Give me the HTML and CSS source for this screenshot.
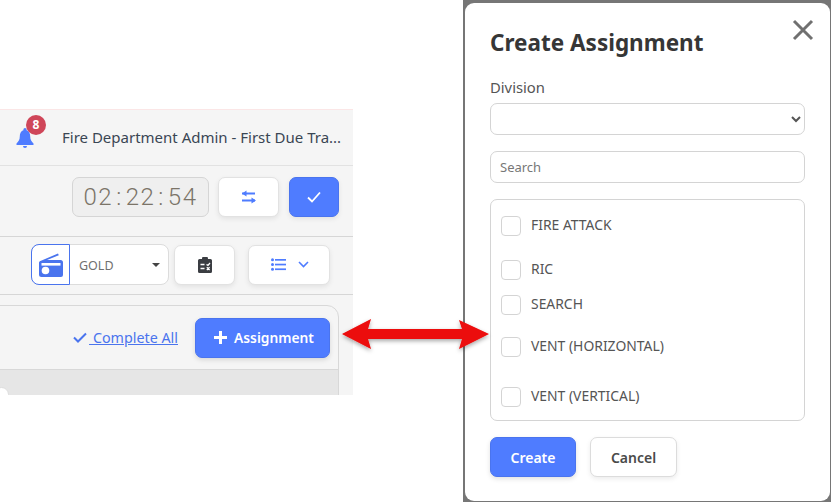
FILE: index.html
```html
<!DOCTYPE html>
<html lang="en">
<head>
<meta charset="utf-8">
<title>Create Assignment</title>
<link rel="stylesheet" href="styles.css">
</head>
<body>
<section class="app">
  <div class="bar bar-title">
    <span class="bell">
      <svg width="20" height="22" viewBox="0 0 20 22"><path fill="#4f7cff" d="M10 1a1.600 1.600 0 0 1 1.600 1.600v.6c2.400.7 3.600 3.200 3.600 6.100 0 3.800 1.400 5.300 3.300 7.200v1.500h-17v-1.500c1.900-1.900 3.300-3.400 3.300-7.200 0-2.900 1.200-5.400 3.600-6.100v-.6A1.600 1.600 0 0 1 10 1z"/><path fill="#4f7cff" d="M8 19h4a2 2 0 0 1-4 0z"/></svg>
      <b class="badge">8</b>
    </span>
    <span class="app-title">Fire Department Admin - First Due Tra...</span>
  </div>
  <div class="bar bar-clock">
    <span class="clock">02<span class="sep">:</span>22<span class="sep">:</span>54</span>
    <button class="tool tool-sliders" type="button">
      <svg width="16" height="16" viewBox="0 0 16 16" fill="none" stroke="#4f7cff" stroke-width="1.800"><path d="M1 4.500h13M1 11.500h13"/><path fill="#4f7cff" stroke="none" d="M5.500 1.500v6L1 4.500zM10.500 8.500v6l4.500-3z"/></svg>
    </button>
    <button class="tool tool-primary" type="button">
      <svg width="16" height="14" viewBox="0 0 16 14" fill="none" stroke="#fff" stroke-width="1.800"><path d="M2 7.500l4 4 8-9"/></svg>
    </button>
  </div>
  <div class="bar bar-controls">
    <div class="radio-select">
      <span class="radio-icon">
        <svg width="24" height="26" viewBox="0 0 24 26"><path fill="#4a74ee" d="M2 8.800L19 1.500l.8 1.700L8 8h13.500A2.500 2.500 0 0 1 24 10.500V23a2 2 0 0 1-2 2H2.500A2.500 2.500 0 0 1 0 22.500v-12A2.500 2.500 0 0 1 2 8.800z"/><circle cx="6.500" cy="18.500" r="3.800" fill="#fff"/><rect x="2.500" y="11" width="19" height="2.600" fill="#fff"/></svg>
      </span>
      <span class="radio-value">GOLD<i class="caret"></i></span>
    </div>
    <button class="tool tool-clip" type="button">
      <svg width="14" height="16" viewBox="0 0 14 16"><path fill="#3a3d42" d="M1.500 2H4a3 3 0 0 1 6 0h2.500A1.500 1.500 0 0 1 14 3.500v11a1.500 1.500 0 0 1-1.500 1.500h-11A1.500 1.500 0 0 1 0 14.500v-11A1.500 1.500 0 0 1 1.500 2z"/><path stroke="#fff" stroke-width="1.300" fill="none" d="M2.500 7.500h4M2.500 11.500h4M8.500 7.500l1.500 1 2-2.500M8.800 10.200l2.800 2.800M11.600 10.200l-2.800 2.800"/></svg>
    </button>
    <button class="tool tool-list" type="button">
      <svg width="15" height="13" viewBox="0 0 15 13" fill="#4f7cff"><circle cx="1.500" cy="1.800" r="1.500"/><circle cx="1.500" cy="6.500" r="1.500"/><circle cx="1.500" cy="11.200" r="1.500"/><rect x="4" y="1" width="11" height="1.700"/><rect x="4" y="5.700" width="11" height="1.700"/><rect x="4" y="10.400" width="11" height="1.700"/></svg>
      <svg width="11" height="7" viewBox="0 0 11 7" fill="none" stroke="#4f7cff" stroke-width="1.600"><path d="M1 1l4.500 4.500L10 1"/></svg>
    </button>
  </div>
  <div class="card">
    <div class="card-head">
      <a class="complete" href="#">
        <svg width="14" height="11" viewBox="0 0 14 11" fill="none" stroke="#4a74ee" stroke-width="2"><path d="M1 5.500l4 4 8-8"/></svg>
        <span>&nbsp;Complete All</span>
      </a>
      <button class="btn-primary btn-assign" type="button">
        <svg width="13" height="13" viewBox="0 0 13 13" fill="#fff"><path d="M5 0h3v5h5v3H8v5H5V8H0V5h5z"/></svg>
        Assignment
      </button>
    </div>
    <div class="card-body"><i class="knob"></i></div>
  </div>
</section>

<section class="backdrop">
  <div class="modal">
    <button class="close" type="button" aria-label="Close">
      <svg width="22" height="22" viewBox="0 0 22 22" stroke="#707070" stroke-width="3" fill="none"><path d="M2 2l18 18M20 2L2 20"/></svg>
    </button>
    <h1 class="modal-title">Create Assignment</h1>
    <label class="field-label" for="division">Division</label>
    <select class="input select" id="division"><option></option></select>
    <input class="input search" type="text" placeholder="Search">
    <div class="checklist">
      <label class="check gap-44"><i class="box"></i><span>FIRE ATTACK</span></label>
      <label class="check gap-35"><i class="box"></i><span>RIC</span></label>
      <label class="check gap-42"><i class="box"></i><span>SEARCH</span></label>
      <label class="check gap-50"><i class="box"></i><span>VENT (HORIZONTAL)</span></label>
      <label class="check"><i class="box"></i><span>VENT (VERTICAL)</span></label>
    </div>
    <div class="actions">
      <button class="btn-primary btn-create" type="button">Create</button>
      <button class="btn-cancel" type="button">Cancel</button>
    </div>
  </div>
</section>

<svg class="arrow" width="160" height="44" viewBox="0 0 160 44">
  <defs><filter id="sh" x="-5%" y="-30%" width="110%" height="160%"><feDropShadow dx="0" dy="2" stdDeviation="2" flood-color="#000" flood-opacity=".35"/></filter></defs>
  <path filter="url(#sh)" fill="#ec0808" d="M4 17L33 2l-3 10h94l-3-9 30 14-30 15 3-10H30l3 10z"/>
</svg>
</body>
</html>
```
FILE: styles.css
```css
* { box-sizing: border-box; }
html, body { margin: 0; padding: 0; }
body {
  position: relative;
  width: 831px;
  height: 502px;
  overflow: hidden;
  background: #fff;
  font-family: "Noto Sans", "Open Sans", sans-serif;
  color: #4a4a4a;
}
button { font-family: inherit; cursor: pointer; }

/* left screenshot */
.app {
  position: absolute;
  left: 0;
  top: 109px;
  width: 353px;
  height: 286px;
  overflow: hidden;
  background: #f5f5f5;
  border-top: 1px solid #fbe6e6;
}
.bar {
  display: flex;
  align-items: center;
  border-bottom: 1px solid #dcdcdc;
}
.bar-title { height: 56px; padding-left: 15px; border-bottom-color: #e2e2e2; }
.bell { position: relative; width: 20px; height: 22px; }
.bell svg { display: block; }
.badge {
  position: absolute;
  left: 11px;
  top: -12px;
  width: 20px;
  height: 20px;
  border-radius: 50%;
  background: #cf4659;
  color: #fff;
  font-size: 12px;
  line-height: 20px;
  text-align: center;
}
.app-title {
  margin-left: 27px;
  margin-bottom: 2px;
  font-size: 15px;
  color: #3a4654;
  white-space: nowrap;
}
.bar-clock {
  height: 71px;
  justify-content: flex-end;
  gap: 10px;
  padding-right: 14px;
  padding-bottom: 8px;
  border-bottom-color: #d6d6d6;
}
.clock {
  width: 137px;
  height: 40px;
  margin-right: -1px;
  border: 1px solid #d5d5d5;
  border-radius: 7px;
  background: #efefef;
  color: #7b7468;
  font-family: Roboto, sans-serif;
  font-weight: 300;
  font-size: 24px;
  line-height: 38px;
  letter-spacing: 1.500px;
  text-align: center;
}
.sep { margin: 0 3px; }
.tool {
  display: flex;
  align-items: center;
  justify-content: center;
  height: 40px;
  padding: 0;
  border: 1px solid #e2e2e2;
  border-radius: 7px;
  background: #fff;
  box-shadow: 0 2px 5px rgba(0,0,0,.08);
}
.tool-sliders { width: 61px; }
.tool-primary { width: 50px; background: #4f7cff; border-color: #4a74ee; }
.bar-controls {
  height: 58px;
  padding-left: 31px;
  padding-bottom: 2px;
  border-bottom-color: #d6d6d6;
}
.radio-select {
  display: flex;
  width: 138px;
  height: 41px;
  border: 1px solid #dcdcdc;
  border-radius: 8px;
  background: #fff;
}
.radio-icon {
  display: flex;
  align-items: center;
  justify-content: center;
  width: 39px;
  margin: -1px 0 -1px -1px;
  border: 1px solid #4a74ee;
  border-radius: 8px 0 0 8px;
  background: #fff;
}
.radio-value {
  position: relative;
  flex: 1;
  padding-left: 9px;
  font-size: 12.500px;
  line-height: 41px;
  color: #707070;
}
.caret {
  position: absolute;
  right: 8px;
  top: 18px;
  border: 4px solid transparent;
  border-top: 4px solid #444;
  border-bottom: 0;
}
.tool-clip { width: 61px; margin-left: 5px; }
.tool-list { width: 82px; margin-left: 13px; padding-left: 2px; gap: 12px; }

.card {
  width: 340px;
  height: 100px;
  margin: 10px 0 0 -1px;
  border: 1px solid #d8d8d8;
  border-radius: 0 12px 0 0;
  background: #f5f5f5;
}
.card-head {
  display: flex;
  align-items: center;
  justify-content: flex-end;
  height: 64px;
  padding-right: 8px;
  border-bottom: 1px solid #d8d8d8;
}
.complete {
  display: flex;
  align-items: center;
  margin-right: 17px;
  color: #4a74ee;
  font-size: 14.300px;
  white-space: pre;
}
.complete svg { margin-right: 2px; }
.complete span { text-decoration: underline; }
.btn-primary {
  border: 1px solid #4a74ee;
  border-radius: 7px;
  background: #4f7cff;
  color: #fff;
  font-weight: 600;
  box-shadow: 0 2px 5px rgba(0,0,0,.12);
}
.btn-assign {
  display: flex;
  align-items: center;
  justify-content: center;
  gap: 7px;
  width: 135px;
  height: 40px;
  padding: 0 0 0 3px;
  font-size: 13.800px;
}
.card-body { position: relative; height: 40px; background: #e6e6e6; }
.knob {
  position: absolute;
  left: -6px;
  top: 17px;
  width: 15px;
  height: 15px;
  border: 1px solid #ddd;
  border-radius: 50%;
  background: #fff;
}

/* modal screenshot */
.backdrop {
  position: absolute;
  left: 463px;
  top: 0;
  width: 368px;
  height: 502px;
  padding: 3px 1px 1px 2px;
  background: #767676;
}
.modal {
  position: relative;
  display: flex;
  flex-direction: column;
  align-items: flex-start;
  height: 498px;
  padding: 23px 25px 0 25px;
  border-radius: 9px;
  background: #fff;
}
.close {
  position: absolute;
  right: 16px;
  top: 16px;
  width: 22px;
  height: 22px;
  padding: 0;
  border: 0;
  background: none;
}
.close svg { display: block; }
.modal-title {
  margin: 0;
  font-family: "Noto Sans", sans-serif;
  font-size: 22.500px;
  font-weight: 700;
  line-height: 34px;
  color: #363636;
}
.field-label {
  margin-top: 17px;
  font-size: 14.800px;
  line-height: 20px;
  color: #555;
}
.input {
  display: block;
  width: 315px;
  height: 32px;
  border: 1px solid #d4d4d4;
  border-radius: 7px;
  background: #fff;
  font-family: inherit;
  font-size: 13px;
  color: #555;
}
.select { margin-top: 6px; }
.search { margin-top: 16px; padding: 0 9px; }
.search::placeholder { color: #777; opacity: 1; }
.checklist {
  display: flex;
  flex-direction: column;
  width: 315px;
  height: 222px;
  margin-top: 16px;
  padding: 16px 10px 0;
  border: 1px solid #d4d4d4;
  border-radius: 7px;
}
.check {
  display: flex;
  align-items: flex-start;
  gap: 10px;
  height: 20px;
  font-size: 13.900px;
  line-height: 17px;
  color: #555;
}
.check span { white-space: nowrap; }
.gap-44 { margin-bottom: 24px; }
.gap-35 { margin-bottom: 15px; }
.gap-42 { margin-bottom: 22px; }
.gap-50 { margin-bottom: 30px; }
.box {
  flex: none;
  width: 20px;
  height: 20px;
  border: 1px solid #d4d4d4;
  border-radius: 4px;
  background: #fff;
}
.actions { display: flex; gap: 14px; margin-top: 16px; }
.btn-create { width: 86px; height: 40px; font-size: 14px; }
.btn-cancel {
  width: 87px;
  height: 40px;
  border: 1px solid #dcdcdc;
  border-radius: 7px;
  background: #fff;
  color: #4a4a4a;
  font-size: 14px;
  font-weight: 600;
  box-shadow: 0 2px 5px rgba(0,0,0,.08);
}

.arrow {
  position: absolute;
  left: 338px;
  top: 317px;
}
```
